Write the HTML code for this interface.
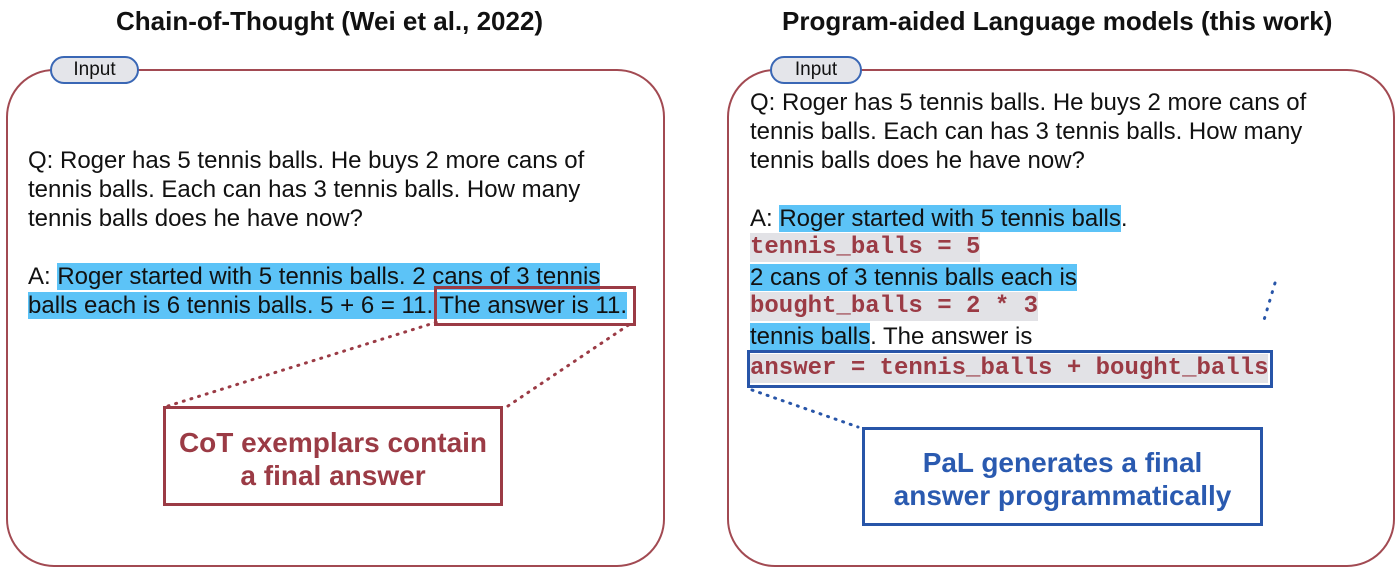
<!DOCTYPE html>
<html><head><meta charset="utf-8"><style>
body{margin:0;width:1400px;height:568px;background:#fff;position:relative;overflow:hidden;font-family:"Liberation Sans",sans-serif;}
.a{position:absolute;white-space:nowrap}
.t{font-size:26px;font-weight:bold;color:#111}
.l{font-size:24px;color:#111;line-height:29px}
.h{background:#5cc3f7}
.c{font-family:"Liberation Mono",monospace;font-weight:bold;color:#9b3b45;background:#e2e2e6;font-size:24px;line-height:29px;display:inline-block}
.box{position:absolute;border:2px solid #a24a52;border-radius:48px}
.pill{position:absolute;background:#e4e5ea;border:2px solid #3a67b5;border-radius:14px;font-size:19px;text-align:center;line-height:24px;color:#111}
</style></head><body>
<div class="a t" style="left:116px;top:6px">Chain-of-Thought (Wei et al., 2022)</div>
<div class="a t" style="left:782px;top:6px">Program-aided Language models (this work)</div>

<div class="box" style="left:6px;top:69px;width:655px;height:494px"></div>
<div class="box" style="left:727px;top:69px;width:664px;height:494px"></div>
<div class="pill" style="left:50px;top:56px;width:85px;height:24px">Input</div>
<div class="pill" style="left:770px;top:56px;width:88px;height:24px">Input</div>

<div class="a l" style="left:28px;top:146px">Q: Roger has 5 tennis balls. He buys 2 more cans of<br>tennis balls. Each can has 3 tennis balls. How many<br>tennis balls does he have now?</div>
<div class="a l" style="left:28px;top:262px">A: <span class="h">Roger started with 5 tennis balls. 2 cans of 3 tennis</span><br><span class="h">balls each is 6 tennis balls. 5 + 6 = 11. The answer is 11.</span></div>
<div class="a" style="left:434px;top:286px;width:196px;height:34px;border:3px solid #9b3b45"></div>

<svg class="a" style="left:0;top:0" width="1400" height="568">
<line x1="168" y1="406" x2="437" y2="322" stroke="#9b3b45" stroke-width="3" stroke-dasharray="1 7" stroke-linecap="round"/>
<line x1="508" y1="406" x2="630" y2="324" stroke="#9b3b45" stroke-width="3" stroke-dasharray="1 7" stroke-linecap="round"/>
<line x1="752" y1="390" x2="858" y2="427" stroke="#2855a8" stroke-width="3" stroke-dasharray="1 7" stroke-linecap="round"/>
<line x1="1275" y1="283" x2="1264" y2="320" stroke="#2855a8" stroke-width="3" stroke-dasharray="1 8" stroke-linecap="round"/>
</svg>

<div class="a" style="left:163px;top:406px;width:340px;height:100px;border:3px solid #9b3b45;background:#fff;text-align:center;font-size:28px;font-weight:bold;color:#9b3b45;line-height:33px;padding-top:17px;box-sizing:border-box">CoT exemplars contain<br>a final answer</div>

<div class="a l" style="left:750px;top:88px">Q: Roger has 5 tennis balls. He buys 2 more cans of<br>tennis balls. Each can has 3 tennis balls. How many<br>tennis balls does he have now?</div>
<div class="a l" style="left:750px;top:204px">A: <span class="h">Roger started with 5 tennis balls</span>.</div>
<div class="a" style="left:750px;top:233px"><span class="c">tennis_balls = 5</span></div>
<div class="a l" style="left:750px;top:263px"><span class="h">2 cans of 3 tennis balls each is</span></div>
<div class="a" style="left:750px;top:292px"><span class="c">bought_balls = 2 * 3</span></div>
<div class="a l" style="left:750px;top:322px"><span class="h">tennis balls</span>. The answer is</div>
<div class="a" style="left:747px;top:350px;width:520px;height:32px;border:3px solid #2855a8"></div>
<div class="a" style="left:750px;top:354px"><span class="c">answer = tennis_balls + bought_balls</span></div>

<div class="a" style="left:862px;top:427px;width:401px;height:99px;border:3px solid #2855a8;background:#fff;text-align:center;font-size:28px;font-weight:bold;color:#2a5ab0;line-height:33px;padding-top:16px;box-sizing:border-box">PaL generates a final<br>answer programmatically</div>
</body></html>
